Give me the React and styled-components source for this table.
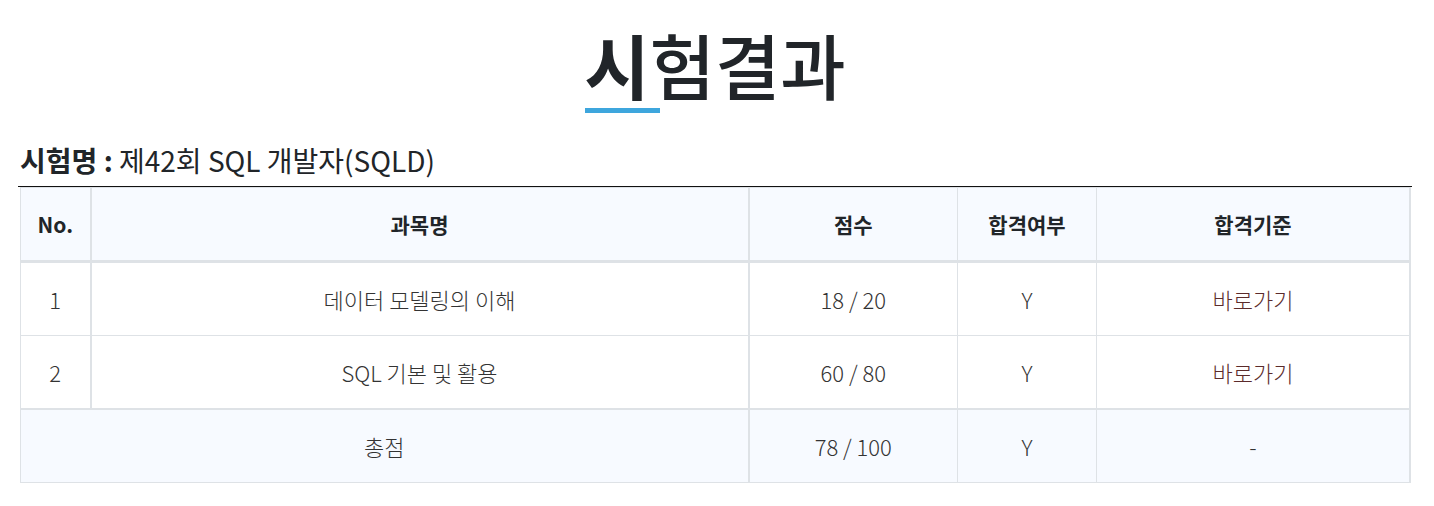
import React from "react";
import styled, { createGlobalStyle } from "styled-components";

const GlobalStyle = createGlobalStyle`
  body {
    margin: 0;
    background: #fff;
    font-family: "Noto Sans CJK KR", "Noto Sans", sans-serif;
    color: #212529;
  }
`;

const Page = styled.div`
  width: 1434px;
  padding: 0 22px 0 18px;
  box-sizing: border-box;
`;

const Title = styled.h1`
  margin: 0;
  padding-top: 23px;
  text-align: center;
  font-size: 71px;
  font-weight: 500;
  line-height: 80px;
  color: #212529;

  .accent {
    position: relative;
    font-weight: 700;
    display: inline-block;

    &::after {
      content: "";
      position: absolute;
      left: 1px;
      bottom: -10px;
      width: 75px;
      height: 5px;
      background: #3ea6dd;
    }
  }
`;

const ExamName = styled.h2`
  margin: 39px 0 0 2px;
  font-size: 28px;
  font-weight: 400;
  line-height: 36px;
  padding-bottom: 8px;
  color: #212529;

  strong {
    font-weight: 700;
  }
`;

const TableWrap = styled.div`
  border-top: 1px solid #111;
  padding: 0 1px 0 2px;
`;

const Table = styled.table`
  width: 100%;
  border-collapse: collapse;
  table-layout: fixed;
  font-size: 22px;

  th,
  td {
    border: 1px solid #dee2e6;
    text-align: center;
    vertical-align: middle;
    height: 72px;
    padding: 0;
  }

  th {
    background: #f7faff;
    font-weight: 700;
    font-size: 21px;
    border-bottom-width: 3px;
  }

  td {
    font-weight: 300;
    color: #333;
  }
`;

const Row = styled.tr`
  td {
    background: ${({ $total }) => ($total ? "#f7faff" : "#fff")};
    border-top-width: ${({ $total }) => ($total ? "2px" : "1px")};
  }
`;

const Cell = styled.td`
  && {
    border-right-width: ${({ $thick }) => ($thick ? "2px" : "1px")};
  }
`;

const HeadCell = styled.th`
  && {
    border-right-width: ${({ $thick }) => ($thick ? "2px" : "1px")};
  }
`;

const Link = styled.a`
  color: #5b2b2b;
  text-decoration: none;
`;

const subjects = [
  { no: 1, name: "데이터 모델링의 이해", score: "18 / 20", pass: "Y" },
  { no: 2, name: "SQL 기본 및 활용", score: "60 / 80", pass: "Y" },
];

const App = () => (
  <Page>
    <GlobalStyle />
    <Title>
      <span className="accent">시</span>험결과
    </Title>
    <ExamName>
      <strong>시험명 :</strong> 제42회 SQL 개발자(SQLD)
    </ExamName>
    <TableWrap>
      <Table>
        <colgroup>
          <col style={{ width: 70 }} />
          <col style={{ width: 658 }} />
          <col style={{ width: 209 }} />
          <col style={{ width: 139 }} />
          <col />
        </colgroup>
        <thead>
          <tr>
            <HeadCell $thick>No.</HeadCell>
            <HeadCell $thick>과목명</HeadCell>
            <HeadCell>점수</HeadCell>
            <HeadCell>합격여부</HeadCell>
            <HeadCell $thick>합격기준</HeadCell>
          </tr>
        </thead>
        <tbody>
          {subjects.map((s) => (
            <Row key={s.no}>
              <Cell $thick>{s.no}</Cell>
              <Cell $thick>{s.name}</Cell>
              <Cell>{s.score}</Cell>
              <Cell>{s.pass}</Cell>
              <Cell $thick>
                <Link href="#">바로가기</Link>
              </Cell>
            </Row>
          ))}
          <Row $total>
            <Cell colSpan={2} $thick>
              총점
            </Cell>
            <Cell>78 / 100</Cell>
            <Cell>Y</Cell>
            <Cell $thick>-</Cell>
          </Row>
        </tbody>
      </Table>
    </TableWrap>
  </Page>
);

export default App;
